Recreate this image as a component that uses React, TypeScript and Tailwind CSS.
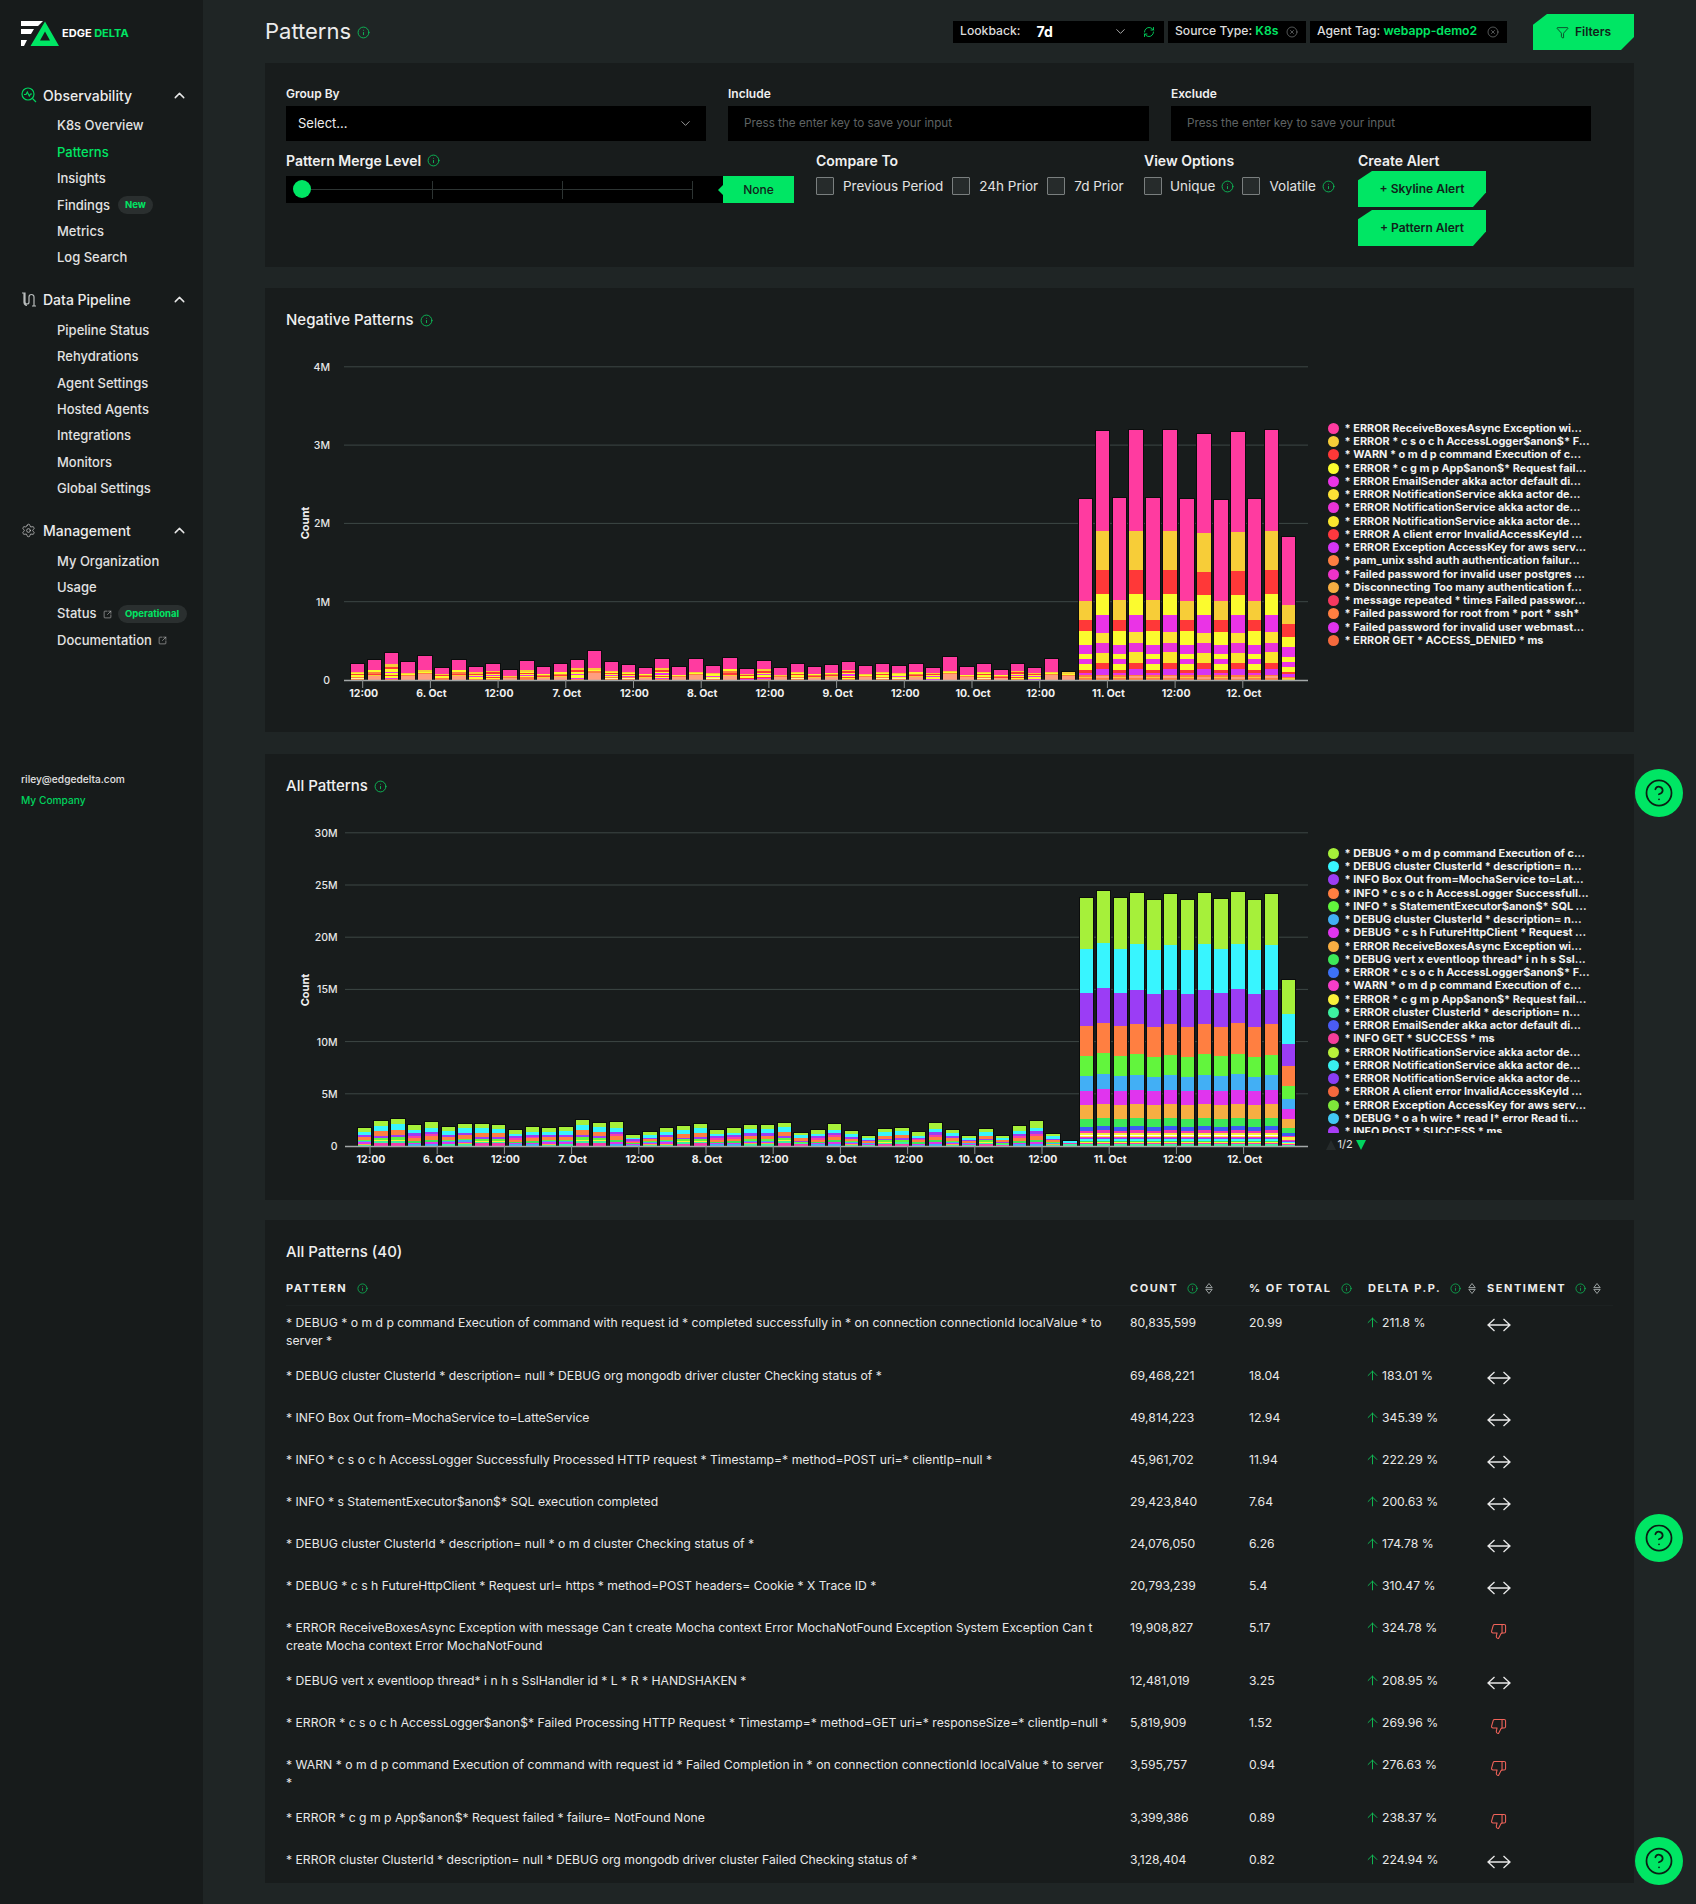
import React from "react";
import { ChevronUp, ChevronDown, Settings, SquareArrowOutUpRight, Info, ArrowUp, ThumbsDown, RefreshCw, Funnel, CircleX, CircleHelp } from "lucide-react";

type Seg = { c: string; h: number };

const P = "#ff3ba0", G = "#f7cd38", R = "#ff3838", Y = "#fbfb2e", M = "#ea33e6", O = "#ff7f41", Pk = "#ff9e80", V = "#d535f5", W = "#fff4a0";
const tallA = [[P, 100.7], [G, 19.3], [R, 11.3], [Y, 13.3], [M, 9.3], [Y, 4.7], [M, 5.3], [Y, 5.7], [R, 2.7], [M, 2.7], [O, 1.5], [G, 1], [O, 2]] as const;
const tallB = [[P, 100], [G, 39], [R, 24], [Y, 20.3], [M, 17.7], ["#fde236", 10.3], ["#ea33d8", 9.7], ["#fae62e", 10.7], [R, 5.7], [V, 6], [O, 1.5], [Pk, 2], [O, 1.5]] as const;
const lastN = [[P, 67], [G, 19], [R, 12.7], [Y, 10.7], [M, 9.3], [Y, 5], [M, 5], [Y, 5.7], [R, 1.5], [V, 3], [O, 1.5], [G, 1.5]] as const;

const smallVariants1: (readonly [string, number])[][] = [
  [[P, 0.48], [G, 0.08], [Y, 0.06], [R, 0.05], [Y, 0.07], [M, 0.04], [Y, 0.05], [O, 0.05], [W, 0.04], [O, 0.08]],
  [[P, 0.6], [G, 0.05], [Y, 0.05], [O, 0.05], [Pk, 0.25]],
  [[P, 0.42], [G, 0.1], [R, 0.09], [Y, 0.08], [M, 0.06], [Y, 0.08], [R, 0.04], [Y, 0.05], [M, 0.04], [O, 0.04]],
  [[P, 0.52], [Y, 0.08], [O, 0.09], [R, 0.06], [G, 0.07], [Pk, 0.18]],
];

const h1 = [16, 20, 27, 18, 24, 12, 20, 13, 16, 10, 19, 13, 16, 20, 29, 18, 15, 12, 21, 13, 21, 14, 22, 11, 19, 12, 16, 13, 15, 18, 14, 16, 14, 16, 12, 23, 13, 16, 10, 16, 12, 21];
const t1 = [180.7, 248.7, 181.7, 249.7, 181.7, 249.7, 180.7, 246.3, 179.7, 247.7, 180.7, 249.7, 142.7];

const stack1: Seg[][] = [
  ...h1.map((h, i) => smallVariants1[(i * 3 + (i >> 2)) % 4].map(([c, f]) => ({ c, h: f * h }))),
  [{ c: G, h: 1.5 }, { c: Y, h: 1.5 }, { c: O, h: 1 }, { c: Pk, h: 4 }],
  ...t1.map((total, i) => {
    const src = i === 12 ? lastN : i % 2 === 0 ? tallA : tallB;
    const sum = src.reduce((a, s) => a + s[1], 0);
    return src.map(([c, h]) => ({ c, h: (h * total) / sum }));
  }),
];

const L = "#a6f03a", C = "#38f5ff", Pu = "#9b3df5", Or = "#ff7f41", Gr = "#62f53d", B = "#42aff5", Ma = "#e035ee", Go = "#f7ae42", Gn = "#3de858", Bl = "#3d5cf5", Pi = "#f53dae", Ye = "#faf03a", Mi = "#3df0a0";
const tall2 = [[L, 51], [C, 45], [Pu, 34], [Or, 30], [Gr, 20.4], [B, 15], [Ma, 14.4], [Go, 13.7], [Gn, 8], [Bl, 4], [Pi, 2.5], [Ye, 2], ["#ffffff", 1], [Ye, 1], [Pi, 1.5], [Pu, 1], [C, 1.5], [Gn, 1.2], [Ye, 1], [Pi, 1], [Mi, 2]] as const;
const small2: (readonly [string, number])[][] = [
  [[L, 0.2], [C, 0.2], [Pu, 0.1], [Or, 0.16], [Gr, 0.08], [B, 0.06], [Ma, 0.07], [Go, 0.05], [Mi, 0.08]],
  [[L, 0.26], [C, 0.14], [Pu, 0.12], [Pi, 0.08], [Or, 0.14], [Gn, 0.1], [Ma, 0.06], [B, 0.1]],
  [[L, 0.18], [C, 0.22], [Or, 0.18], [Pu, 0.08], [Gr, 0.1], [Ye, 0.04], [Mi, 0.08], [Pi, 0.12]],
];
const h2 = [18, 25, 27, 21, 24, 19, 22, 22, 21, 16, 19, 18, 19, 26, 23, 24, 11, 14, 18, 20, 22, 16, 18, 21, 21, 23, 13, 16, 22, 15, 10, 17, 18, 14, 23, 16, 10, 17, 10, 20, 25, 12];
const t2 = [247.7, 255, 247.7, 253.3, 246, 252, 246, 253.3, 247, 254, 246, 252, 165.7];
const stack2: Seg[][] = [
  ...h2.map((h, i) => small2[(i * 2 + (i >> 1)) % 3].map(([c, f]) => ({ c, h: f * h }))),
  [{ c: C, h: 2 }, { c: Pi, h: 0.7 }, { c: Mi, h: 2.3 }],
  ...t2.map((total) => {
    const sum = tall2.reduce((a, s) => a + s[1], 0);
    return tall2.map(([c, h]) => ({ c, h: (h * total) / sum }));
  }),
];

const xLabels = ["12:00", "6. Oct", "12:00", "7. Oct", "12:00", "8. Oct", "12:00", "9. Oct", "12:00", "10. Oct", "12:00", "11. Oct", "12:00", "12. Oct"];

function Chart(props: {
  top: number; height: number; base: number; step: number; ticks: string[]; countY: number; labelRight: number;
  barX: number; pitch: number; bars: Seg[][]; labelX: number; labelStep: number; labelY: number; tickLeft: number;
}) {
  const { top, height, base, step, ticks, countY, labelRight, barX, pitch, bars, labelX, labelStep, labelY, tickLeft } = props;
  return (
    <svg width={1023} height={height} viewBox={`286 ${top} 1023 ${height}`} className="shrink-0 block">
      {ticks.map((t, i) => {
        const y = base - i * step;
        return (
          <g key={t}>
            {i > 0 && <line x1={tickLeft} x2={1308} y1={y} y2={y} stroke="#3d4745" strokeWidth={1} />}
            <text x={labelRight} y={y + 4} textAnchor="end" fontSize={10.5} fontWeight={500} fill="#e6e6e6">{t}</text>
          </g>
        );
      })}
      <text transform={`translate(309 ${countY}) rotate(-90)`} textAnchor="middle" fontSize={11} fontWeight={700} fill="#f0f0f0">Count</text>
      {bars.map((segs, i) => {
        const x = barX + i * pitch;
        const total = segs.reduce((a, s) => a + s.h, 0);
        const rects: React.ReactNode[] = [];
        let acc = 0;
        for (let k = 0; k < segs.length; k++) {
          acc += segs[k].h;
          const yTop = base - total + (acc - segs[k].h);
          rects.push(<rect key={k} x={x} y={yTop} width={13.5} height={segs[k].h + 0.4} fill={segs[k].c} />);
        }
        return (
          <g key={i} shapeRendering="crispEdges">
            <rect x={x - 1} y={base - total - 1} width={15.5} height={total + 1} fill="#0b0d0d" />
            {rects}
          </g>
        );
      })}
      <line x1={tickLeft} x2={1308} y1={base + 0.5} y2={base + 0.5} stroke="#a3a8a8" strokeWidth={1.5} />
      {xLabels.map((l, i) => {
        const x = labelX + i * labelStep;
        return (
          <g key={i}>
            <line x1={x - 1} x2={x - 1} y1={base} y2={base + 8} stroke="#8d9292" strokeWidth={1} />
            <text x={x} y={labelY} textAnchor="middle" fontSize={10.5} fontWeight={700} fill="#f0f0f0">{l}</text>
          </g>
        );
      })}
    </svg>
  );
}

function Legend({ items }: { items: [string, string][] }) {
  return (
    <div className="flex flex-col">
      {items.map(([c, t], i) => (
        <div key={i} className="flex items-center h-[13.25px] shrink-0 whitespace-nowrap">
          <span className="w-[11px] h-[11px] rounded-full shrink-0" style={{ background: c }} />
          <span className="ml-[6px] text-[10.9px] font-bold text-[#f2f2f2] leading-[13px]">{t}</span>
        </div>
      ))}
    </div>
  );
}

const legend1: [string, string][] = [
  ["#ff3ba0", "* ERROR ReceiveBoxesAsync Exception wi..."],
  ["#f7cd38", "* ERROR * c s o c h AccessLogger$anon$* F..."],
  ["#ff3838", "* WARN * o m d p command Execution of c..."],
  ["#fbfb2e", "* ERROR * c g m p App$anon$* Request fail..."],
  ["#ea33e6", "* ERROR EmailSender akka actor default di..."],
  ["#fde236", "* ERROR NotificationService akka actor de..."],
  ["#ea33d8", "* ERROR NotificationService akka actor de..."],
  ["#fae62e", "* ERROR NotificationService akka actor de..."],
  ["#ff383f", "* ERROR A client error InvalidAccessKeyId ..."],
  ["#d535f5", "* ERROR Exception AccessKey for aws serv..."],
  ["#ff7f41", "* pam_unix sshd auth authentication failur..."],
  ["#ee33c8", "* Failed password for invalid user postgres ..."],
  ["#f7ae42", "* Disconnecting Too many authentication f..."],
  ["#f5385f", "* message repeated * times Failed passwor..."],
  ["#ff7f41", "* Failed password for root from * port * ssh*"],
  ["#e033ee", "* Failed password for invalid user webmast..."],
  ["#f56a3d", "* ERROR GET * ACCESS_DENIED * ms"],
];
const legend2: [string, string][] = [
  ["#a6f03a", "* DEBUG * o m d p command Execution of c..."],
  ["#38f5ff", "* DEBUG cluster ClusterId * description= n..."],
  ["#9b3df5", "* INFO Box Out from=MochaService to=Lat..."],
  ["#ff7f41", "* INFO * c s o c h AccessLogger Successfull..."],
  ["#62f53d", "* INFO * s StatementExecutor$anon$* SQL ..."],
  ["#42aff5", "* DEBUG cluster ClusterId * description= n..."],
  ["#e035ee", "* DEBUG * c s h FutureHttpClient * Request ..."],
  ["#f7ae42", "* ERROR ReceiveBoxesAsync Exception wi..."],
  ["#3de858", "* DEBUG vert x eventloop thread* i n h s Ssl..."],
  ["#3d72f5", "* ERROR * c s o c h AccessLogger$anon$* F..."],
  ["#f53dc8", "* WARN * o m d p command Execution of c..."],
  ["#faf03a", "* ERROR * c g m p App$anon$* Request fail..."],
  ["#3df0a0", "* ERROR cluster ClusterId * description= n..."],
  ["#4a5cf5", "* ERROR EmailSender akka actor default di..."],
  ["#f53d9a", "* INFO GET * SUCCESS * ms"],
  ["#b8f03a", "* ERROR NotificationService akka actor de..."],
  ["#38f0f0", "* ERROR NotificationService akka actor de..."],
  ["#8a3df5", "* ERROR NotificationService akka actor de..."],
  ["#f5683d", "* ERROR A client error InvalidAccessKeyId ..."],
  ["#7fe83a", "* ERROR Exception AccessKey for aws serv..."],
  ["#42c8f5", "* DEBUG * o a h wire * read I* error Read ti..."],
  ["#a83df5", "* INFO POST * SUCCESS * ms"],
];

type Row = { lines: string[]; count: string; pct: string; delta: string; bad?: boolean };
const rows: Row[] = [
  { lines: ["* DEBUG * o m d p command Execution of command with request id * completed successfully in * on connection connectionId localValue * to", "server *"], count: "80,835,599", pct: "20.99", delta: "211.8 %" },
  { lines: ["* DEBUG cluster ClusterId * description= null * DEBUG org mongodb driver cluster Checking status of *"], count: "69,468,221", pct: "18.04", delta: "183.01 %" },
  { lines: ["* INFO Box Out from=MochaService to=LatteService"], count: "49,814,223", pct: "12.94", delta: "345.39 %" },
  { lines: ["* INFO * c s o c h AccessLogger Successfully Processed HTTP request * Timestamp=* method=POST uri=* clientIp=null *"], count: "45,961,702", pct: "11.94", delta: "222.29 %" },
  { lines: ["* INFO * s StatementExecutor$anon$* SQL execution completed"], count: "29,423,840", pct: "7.64", delta: "200.63 %" },
  { lines: ["* DEBUG cluster ClusterId * description= null * o m d cluster Checking status of *"], count: "24,076,050", pct: "6.26", delta: "174.78 %" },
  { lines: ["* DEBUG * c s h FutureHttpClient * Request url= https * method=POST headers= Cookie * X Trace ID *"], count: "20,793,239", pct: "5.4", delta: "310.47 %" },
  { lines: ["* ERROR ReceiveBoxesAsync Exception with message Can t create Mocha context Error MochaNotFound Exception System Exception Can t", "create Mocha context Error MochaNotFound"], count: "19,908,827", pct: "5.17", delta: "324.78 %", bad: true },
  { lines: ["* DEBUG vert x eventloop thread* i n h s SslHandler id * L * R * HANDSHAKEN *"], count: "12,481,019", pct: "3.25", delta: "208.95 %" },
  { lines: ["* ERROR * c s o c h AccessLogger$anon$* Failed Processing HTTP Request * Timestamp=* method=GET uri=* responseSize=* clientIp=null *"], count: "5,819,909", pct: "1.52", delta: "269.96 %", bad: true },
  { lines: ["* WARN * o m d p command Execution of command with request id * Failed Completion in * on connection connectionId localValue * to server", "*"], count: "3,595,757", pct: "0.94", delta: "276.63 %", bad: true },
  { lines: ["* ERROR * c g m p App$anon$* Request failed * failure= NotFound None"], count: "3,399,386", pct: "0.89", delta: "238.37 %", bad: true },
  { lines: ["* ERROR cluster ClusterId * description= null * DEBUG org mongodb driver cluster Failed Checking status of *"], count: "3,128,404", pct: "0.82", delta: "224.94 %" },
];

const Inf = ({ s = 13 }: { s?: number }) => <Info size={s} strokeWidth={1.6} className="text-[#0cc45a] shrink-0 block" />;

const Sort = () => (
  <svg width="8" height="11" viewBox="0 0 8 11" className="shrink-0 block"><path d="M4 .5 7.2 4.6H.8zM4 10.5.8 6.4h6.4z" fill="none" stroke="#9aa0a0" strokeWidth="1" /></svg>
);

const Horiz = () => (
  <svg width="24" height="14" viewBox="0 0 24 14" fill="none" stroke="#e8e8e8" strokeWidth="1.3"><path d="M1 7h22M7.5 1 1 7l6.5 6M16.5 1 23 7l-6.5 6" /></svg>
);

function NavHead({ icon, label, first }: { icon: React.ReactNode; label: string; first?: boolean }) {
  return (
    <div className={`flex items-center h-[26px] pl-[21px] pr-[16px] mb-[5px] ${first ? "mt-[36px]" : "mt-[15px]"}`}>
      <span className="w-[22px] shrink-0 flex">{icon}</span>
      <span className="text-[14px] font-medium text-[#ececec]">{label}</span>
      <ChevronUp size={17} strokeWidth={2} className="ml-auto mr-[-1px] text-[#e8e8e8]" />
    </div>
  );
}

function NavItem({ children, active }: { children: React.ReactNode; active?: boolean }) {
  return (
    <div className={`flex items-center h-[26.4px] pl-[57px] text-[13px] font-medium ${active ? "text-[#00e664]" : "text-[#e2e2e2]"}`}>{children}</div>
  );
}

const Badge = ({ children, cls }: { children: React.ReactNode; cls: string }) => (
  <span className={`inline-flex items-center justify-center h-[18px] rounded-full bg-[#2a2f2f] text-[#00e664] text-[9.5px] font-bold ${cls}`}>{children}</span>
);

const Ext = () => <SquareArrowOutUpRight size={9} strokeWidth={1.6} className="text-[#bdbdbd] ml-[6px]" />;

const Check = () => <span className="block w-[18px] h-[18px] shrink-0 border border-[#7a7f7f] bg-[#262b2b] rounded-[1px]" />;

const Alert = ({ children }: { children: React.ReactNode }) => (
  <div className="w-[128px] h-[36px] flex items-center justify-center bg-[#00e664] text-[#10231a] text-[12px] font-semibold [clip-path:polygon(14px_0,100%_0,100%_60%,calc(100%-13px)_100%,0_100%,0_26%)]">{children}</div>
);

const Help = ({ top }: { top: string }) => (
  <div className={`absolute left-[1635px] ${top} w-[48px] h-[48px] rounded-full bg-[#00e664] flex items-center justify-center`}>
    <CircleHelp size={30} strokeWidth={1.4} className="text-[#0a1f14]" />
  </div>
);

export default function App() {
  const th = "text-[11px] font-bold tracking-[0.14em] text-[#ececec]";
  return (
    <div className="relative flex w-[1696px] h-[1904px] overflow-hidden bg-[#1f2525] text-[#f0f0f0] [font-family:Inter,'Liberation_Sans',sans-serif]">
      {/* Sidebar */}
      <aside className="w-[203px] shrink-0 bg-[#171b1b] pt-[21px]">
        <div className="flex items-center pl-[21px] h-[25px]">
          <svg width="39" height="26" viewBox="21 21 39 26">
            <path d="M21 21h22l-5 5H21zM21 29h13l-3 5H21zM21 40h6l-3 6h-3z" fill="#fff" />
            <path fillRule="evenodd" d="M45 21.5 59 46H30.5zM45 31.5 40 40.5H50z" fill="#00e664" />
          </svg>
          <span className="ml-[2px] text-[11px] font-bold text-white">EDGE <span className="text-[#00e664]">DELTA</span></span>
        </div>
        <NavHead first label="Observability" icon={
          <svg width="16" height="16" viewBox="0 0 16 16" fill="none" stroke="#00d45e" strokeWidth="1.2"><circle cx="7" cy="7" r="6" /><path d="M11.5 11.5 15 15M3 7.5h2l1.3-2.5 2 4L9.5 7H11" /></svg>
        } />
        <NavItem>K8s Overview</NavItem>
        <NavItem active>Patterns</NavItem>
        <NavItem>Insights</NavItem>
        <NavItem>Findings<Badge cls="ml-[8px] w-[35px]">New</Badge></NavItem>
        <NavItem>Metrics</NavItem>
        <NavItem>Log Search</NavItem>
        <NavHead label="Data Pipeline" icon={
          <svg width="16" height="16" viewBox="0 0 16 16" fill="none" stroke="#b9bdbd" strokeWidth="1.2"><path d="M1 2h3v9a2 2 0 0 0 4 0V6a2.5 2.5 0 0 1 5 0v9M3 2v9.5a3.5 3.5 0 0 0 3 3M11 15h4" /></svg>
        } />
        <NavItem>Pipeline Status</NavItem>
        <NavItem>Rehydrations</NavItem>
        <NavItem>Agent Settings</NavItem>
        <NavItem>Hosted Agents</NavItem>
        <NavItem>Integrations</NavItem>
        <NavItem>Monitors</NavItem>
        <NavItem>Global Settings</NavItem>
        <NavHead label="Management" icon={<Settings size={15} strokeWidth={1.2} className="text-[#c9c9c9]" />} />
        <NavItem>My Organization</NavItem>
        <NavItem>Usage</NavItem>
        <NavItem>Status<Ext /><Badge cls="ml-[6px] w-[69px]">Operational</Badge></NavItem>
        <NavItem>Documentation<Ext /></NavItem>
        <div className="pl-[21px] mt-[115px] text-[10.2px] font-medium text-[#e2e2e2] leading-[21px]">
          <div>riley@edgedelta.com</div>
          <div className="text-[#00d45e]">My Company</div>
        </div>
      </aside>

      {/* Main */}
      <main className="flex-1 pl-[62px] pr-[62px] flex flex-col">
        <header className="h-[63px] flex items-center shrink-0">
          <h1 className="text-[22px] font-normal text-[#ececec]">Patterns</h1>
          <span className="ml-[6px] mt-[1px]"><Inf /></span>
          <div className="ml-auto flex items-center text-[12.2px] font-medium">
            <div className="w-[211px] h-[22px] bg-black flex items-center pl-[7px] pr-[9px]">
              <span className="text-[#dcdcdc]">Lookback:</span>
              <span className="ml-[16px] text-[14px] font-bold text-white">7d</span>
              <ChevronDown size={15} strokeWidth={1.3} className="ml-auto text-[#cfcfcf]" />
              <RefreshCw size={12} strokeWidth={1.8} className="ml-[15px] text-[#00d45e]" />
            </div>
            <div className="ml-[4px] w-[138px] h-[22px] bg-black flex items-center pl-[7px]">
              <span className="text-[#dcdcdc]">Source Type:&nbsp;</span><span className="text-[#00e664] font-semibold">K8s</span>
              <CircleX size={12} strokeWidth={1.2} className="ml-auto mr-[8px] text-[#8a8f8f]" />
            </div>
            <div className="ml-[4px] w-[197px] h-[22px] bg-black flex items-center pl-[7px]">
              <span className="text-[#dcdcdc]">Agent Tag:&nbsp;</span><span className="text-[#00e664] font-semibold">webapp-demo2</span>
              <CircleX size={12} strokeWidth={1.2} className="ml-auto mr-[8px] text-[#8a8f8f]" />
            </div>
            <div className="ml-[26px] mt-[1px] w-[101px] h-[36px] bg-[#00e664] flex items-center justify-center text-[#10231a] text-[12px] font-semibold [clip-path:polygon(14px_0,100%_0,100%_64%,calc(100%-13px)_100%,0_100%,0_30%)]">
              <Funnel size={13} strokeWidth={1.4} className="mr-[6px]" />Filters
            </div>
          </div>
        </header>

        {/* Controls */}
        <section className="h-[204px] shrink-0 bg-[#181c1c] px-[21px] pt-[22px]">
          <div className="grid grid-cols-[420px_421px_420px] gap-x-[22px]">
            {[["Group By"], ["Include"], ["Exclude"]].map(([l], i) => (
              <div key={l}>
                <div className="h-[18px] flex items-center text-[12px] font-semibold text-[#f0f0f0]">{l}</div>
                <div className={`mt-[3px] h-[35px] bg-black flex items-center ${i === 0 ? "pl-[12px] pr-[13px] text-[13px] text-[#ededed]" : "pl-[16px] text-[11.7px] text-[#5f6363]"}`}>
                  {i === 0 ? <>Select...<ChevronDown size={15} strokeWidth={1.2} className="ml-auto text-[#c9c9c9]" /></> : "Press the enter key to save your input"}
                </div>
              </div>
            ))}
          </div>
          <div className="flex mt-[9px]">
            <div className="w-[508px] shrink-0">
              <div className="h-[20px] flex items-center text-[14px] font-semibold">Pattern Merge Level<span className="ml-[6px]"><Inf /></span></div>
              <div className="mt-[6px] h-[27px] bg-black flex">
                <div className="relative flex-1">
                  <div className="absolute left-[15px] right-[30px] top-[13px] h-px bg-[#2d3433]" />
                  {["left-[146px]", "left-[276px]", "left-[406px]"].map((c) => (
                    <div key={c} className={`absolute ${c} top-[5px] w-px h-[18px] bg-[#2d3433]`} />
                  ))}
                  <div className="absolute left-[7px] top-[4px] w-[18px] h-[18px] rounded-full bg-[#00e664]" />
                </div>
                <div className="relative w-[71px] bg-[#00e664] flex items-center justify-center text-[12px] font-medium text-[#10231a]">
                  None
                  <span className="absolute left-[-5px] top-[9px] w-0 h-0 border-y-[5px] border-y-transparent border-r-[5px] border-r-[#00e664]" />
                </div>
              </div>
            </div>
            <div className="w-[328px] ml-[22px] shrink-0">
              <div className="h-[20px] flex items-center text-[14px] font-semibold">Compare To</div>
              <div className="mt-[6px] flex items-center text-[13.5px] text-[#e2e2e2]">
                <Check /><span className="ml-[9px]">Previous Period</span>
                <span className="ml-[9px]"><Check /></span><span className="ml-[9px]">24h Prior</span>
                <span className="ml-[9px]"><Check /></span><span className="ml-[9px]">7d Prior</span>
              </div>
            </div>
            <div className="w-[214px] shrink-0">
              <div className="h-[20px] flex items-center text-[14px] font-semibold">View Options</div>
              <div className="mt-[6px] flex items-center text-[13.5px] text-[#e2e2e2]">
                <Check /><span className="ml-[8px]">Unique</span><span className="ml-[6px]"><Inf /></span>
                <span className="ml-[8px]"><Check /></span><span className="ml-[9px]">Volatile</span><span className="ml-[6px]"><Inf /></span>
              </div>
            </div>
            <div className="shrink-0">
              <div className="h-[20px] flex items-center text-[14px] font-semibold">Create Alert</div>
              <div className="mt-[1px]"><Alert>+ Skyline Alert</Alert></div>
              <div className="mt-[3px]"><Alert>+ Pattern Alert</Alert></div>
            </div>
          </div>
        </section>

        {/* Negative */}
        <section className="mt-[21px] h-[444px] shrink-0 bg-[#181c1c] px-[21px] pt-[22px]">
          <div className="h-[20px] flex items-center text-[15px] font-medium">Negative Patterns<span className="ml-[6px]"><Inf /></span></div>
          <div className="flex mt-[10px]">
            <Chart top={340} height={370} base={680} step={78.3} ticks={["0", "1M", "2M", "3M", "4M"]} countY={523} labelRight={330} barX={350.7} pitch={16.93} bars={stack1} labelX={363.7} labelStep={67.7} labelY={697} tickLeft={344} />
            <div className="ml-[18.6px] pt-[81.7px]"><Legend items={legend1} /></div>
          </div>
        </section>

        {/* All */}
        <section className="mt-[22px] h-[446px] shrink-0 bg-[#181c1c] px-[21px] pt-[22px]">
          <div className="h-[20px] flex items-center text-[15px] font-medium">All Patterns<span className="ml-[6px]"><Inf /></span></div>
          <div className="flex mt-[10px]">
            <Chart top={806} height={370} base={1146} step={52.2} ticks={["0", "5M", "10M", "15M", "20M", "25M", "30M"]} countY={990} labelRight={337.5} barX={357.5} pitch={16.8} bars={stack2} labelX={371} labelStep={67.2} labelY={1163} tickLeft={345} />
            <div className="ml-[18.6px] pt-[40.7px]">
              <div className="h-[286px] overflow-hidden"><Legend items={legend2} /></div>
              <div className="mt-[5px] flex items-center text-[11px] text-[#e2e2e2] h-[14px]">
                <span className="w-0 h-0 border-x-[5px] border-x-transparent border-b-[10px] border-b-[#262b2b] ml-[-2px]" />
                <span className="ml-[2px]">1/2</span>
                <span className="ml-[3px] w-0 h-0 border-x-[5px] border-x-transparent border-t-[10px] border-t-[#00d45e]" />
              </div>
            </div>
          </div>
        </section>

        {/* Table */}
        <section className="mt-[20px] h-[663px] shrink-0 bg-[#181c1c] pl-[21px] pr-[21px] pt-[21px]">
          <div className="h-[22px] flex items-center text-[15px] font-medium">All Patterns (40)</div>
          <div className="mt-[13px] grid grid-cols-[844px_119px_119px_119px_1fr] h-[30px] pb-[5px] items-center border-b border-[#1c2121]">
            <div className="flex items-center"><span className={th}>PATTERN</span><span className="ml-[10px]"><Inf s={11} /></span></div>
            <div className="flex items-center"><span className={th}>COUNT</span><span className="ml-[9px]"><Inf s={11} /></span><span className="ml-[7px]"><Sort /></span></div>
            <div className="flex items-center"><span className={th}>% OF TOTAL</span><span className="ml-[9px]"><Inf s={11} /></span></div>
            <div className="flex items-center"><span className={th}>DELTA P.P.</span><span className="ml-[9px]"><Inf s={11} /></span><span className="ml-[7px]"><Sort /></span></div>
            <div className="flex items-center"><span className={th}>SENTIMENT</span><span className="ml-[9px]"><Inf s={11} /></span><span className="ml-[7px]"><Sort /></span></div>
          </div>
          {rows.map((r, i) => (
            <div key={i} className="grid grid-cols-[844px_119px_119px_119px_1fr] pt-[8px] pb-[9px] text-[12.2px] leading-[18px] text-[#e8e8e8]">
              <div className="whitespace-nowrap">{r.lines.map((l, k) => <div key={k}>{l}</div>)}</div>
              <div>{r.count}</div>
              <div>{r.pct}</div>
              <div className="flex items-start">
                <ArrowUp size={15} strokeWidth={1.6} className="mt-[1px] ml-[-3px] mr-[2px] text-[#0fb552]" />
                <span>{r.delta}</span>
              </div>
              <div className="h-[25px] pt-[4px]">
                {r.bad ? <ThumbsDown size={17} strokeWidth={1.5} className="ml-[3px] text-[#f0635a]" /> : <Horiz />}
              </div>
            </div>
          ))}
        </section>
      </main>

      <Help top="top-[769px]" />
      <Help top="top-[1514px]" />
      <Help top="top-[1837px]" />
    </div>
  );
}
